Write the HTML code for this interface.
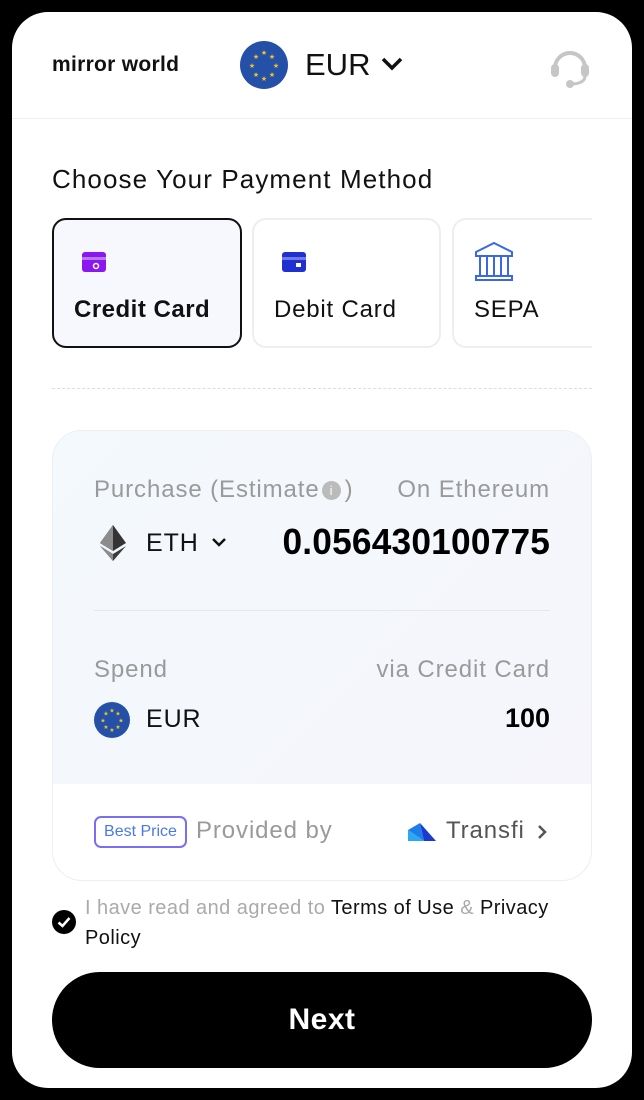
<!DOCTYPE html>
<html><head><style>
*{box-sizing:border-box;margin:0;padding:0}
body{width:644px;height:1100px;background:#000;font-family:"Liberation Sans",sans-serif;position:relative;overflow:hidden}
.card{position:absolute;left:12px;top:12px;width:620px;height:1076px;background:#fff;border-radius:36px}
.a{position:absolute}
.pm{position:absolute;top:218px;height:130px;border-radius:14px;border:2px solid #eee;background:#fff;overflow:hidden}
.pm span{position:absolute;left:20px;top:76px;font-size:24px;color:#111;letter-spacing:0.8px}
.g{color:#9a9a9a}
.w{letter-spacing:0.9px}
</style></head><body>
<div class="card"></div>
<div class="a" style="left:52px;top:53px;font-size:21px;font-weight:bold;letter-spacing:0.3px;color:#111">mirror world</div>
<svg class="a" style="left:240px;top:41px" width="48" height="48" viewBox="0 0 48 48"><circle cx="24" cy="24" r="24" fill="#2450a8"/><g fill="#f2c32b" font-size="7" text-anchor="middle"><text x="24" y="14">★</text><text x="24" y="40">★</text><text x="12" y="27">★</text><text x="36" y="27">★</text><text x="16" y="18">★</text><text x="32" y="18">★</text><text x="16" y="36">★</text><text x="32" y="36">★</text></g></svg>
<div class="a" style="left:305px;top:47px;font-size:31px;color:#111">EUR</div>
<svg class="a" style="left:380px;top:56px" width="24" height="16"><path d="M3 3l9 9 9-9" stroke="#111" stroke-width="3.5" fill="none"/></svg>
<svg class="a" style="left:548px;top:44px" width="44" height="44" viewBox="0 0 44 44"><path d="M7 24a15 15 0 0 1 30 0" stroke="#c6c6c6" stroke-width="4" fill="none"/><rect x="3" y="20" width="8" height="13" rx="4" fill="#c6c6c6"/><rect x="33" y="20" width="8" height="13" rx="4" fill="#c6c6c6"/><path d="M37 32q0 7-12 8" stroke="#c6c6c6" stroke-width="3" fill="none"/><circle cx="22" cy="40" r="4" fill="#c6c6c6"/></svg>
<div class="a" style="left:12px;top:118px;width:620px;height:1px;background:#eee"></div>
<div class="a" style="left:52px;top:164px;font-size:26px;color:#111;letter-spacing:1.1px">Choose Your Payment Method</div>
<div class="pm" style="left:52px;width:190px;border-color:#111;background:#f6f8fd"><svg class="a" style="left:28px;top:32px" width="26" height="20"><rect width="24" height="20" rx="3" fill="#8a17f0"/><rect y="5" width="24" height="3" fill="#b57af5"/><circle cx="14" cy="14" r="2.5" fill="none" stroke="#fff" stroke-width="1.5"/></svg><span style="font-weight:bold;letter-spacing:0.5px">Credit Card</span></div>
<div class="pm" style="left:252px;width:189px"><svg class="a" style="left:28px;top:32px" width="26" height="20"><rect width="24" height="20" rx="3" fill="#1f2fd0"/><rect y="5" width="24" height="3" fill="#6f7ae5"/><rect x="14" y="11" width="5" height="4" fill="#fff"/></svg><span>Debit Card</span></div>
<div class="pm" style="left:452px;width:160px;border-right:none"><svg class="a" style="left:20px;top:21px" width="40" height="40" viewBox="0 0 40 40" fill="none" stroke="#3a66e8" stroke-width="2"><path d="M2 11L20 2l18 9v4H2z"/><path d="M6 16v20M13 16v20M20 16v20M27 16v20M34 16v20"/><rect x="2" y="35" width="36" height="4"/></svg><span>SEPA</span></div>
<div class="a" style="left:592px;top:218px;width:40px;height:132px;background:#fff"></div>
<div class="a" style="left:52px;top:388px;width:540px;border-top:1px dashed #ddd"></div>
<div class="a" style="left:52px;top:430px;width:540px;height:451px;border:1px solid #eee;border-radius:30px;overflow:hidden">
<div style="height:353px;background:linear-gradient(135deg,#f3f9fd,#f5f5fb)"></div></div>
<div class="a g w" style="left:94px;top:476px;font-size:24px">Purchase (Estimate<span style="display:inline-block;width:19px;height:19px;border-radius:50%;background:#bbb;color:#fff;font-size:13px;text-align:center;line-height:19px;vertical-align:2px;margin:0 4px 0 2px;letter-spacing:0">i</span>)</div>
<div class="a g w" style="right:94px;top:476px;font-size:24px">On Ethereum</div>
<svg class="a" style="left:100px;top:525px" width="26" height="36" viewBox="0 0 26 36"><path d="M13 0L0 18l13 8 13-8z" fill="#343434"/><path d="M13 0L0 18l13 8z" fill="#8c8c8c"/><path d="M0 21l13 15 13-15-13 8z" fill="#3c3c3b"/><path d="M0 21l13 15v-7z" fill="#8c8c8c"/></svg>
<div class="a w" style="left:146px;top:529px;font-size:25px;color:#111">ETH</div>
<svg class="a" style="left:210px;top:536px" width="18" height="12"><path d="M3 3l6 6 6-6" stroke="#111" stroke-width="2.5" fill="none"/></svg>
<div class="a" style="right:94px;top:521px;font-size:36px;font-weight:bold;color:#000;letter-spacing:0.2px;transform:scaleX(0.98);transform-origin:right">0.056430100775</div>
<div class="a" style="left:94px;top:610px;width:456px;height:1px;background:#e4e8ee"></div>
<div class="a g w" style="left:94px;top:656px;font-size:24px">Spend</div>
<div class="a g w" style="right:94px;top:656px;font-size:24px">via Credit Card</div>
<svg class="a" style="left:94px;top:702px" width="36" height="36" viewBox="0 0 48 48"><circle cx="24" cy="24" r="24" fill="#2450a8"/><g fill="#f2c32b" font-size="8" text-anchor="middle"><text x="24" y="14">★</text><text x="24" y="40">★</text><text x="12" y="27">★</text><text x="36" y="27">★</text><text x="16" y="18">★</text><text x="32" y="18">★</text><text x="16" y="36">★</text><text x="32" y="36">★</text></g></svg>
<div class="a w" style="left:146px;top:705px;font-size:25px;color:#111">EUR</div>
<div class="a" style="right:94px;top:703px;font-size:27px;font-weight:bold;color:#000">100</div>
<div class="a" style="left:94px;top:816px;width:93px;height:32px;border:2px solid #7a6ff0;border-radius:7px;color:#4a7ae8;font-size:16px;text-align:center;line-height:28px">Best Price</div>
<div class="a g w" style="left:196px;top:817px;font-size:24px">Provided by</div>
<svg class="a" style="left:408px;top:822px" width="28" height="20"><path d="M0 8l12-7 4 18z" fill="#1e7de8"/><path d="M12 1l16 18H16z" fill="#1a3ad0"/><path d="M0 8l16 11H0z" fill="#2aa9f0"/></svg>
<div class="a w" style="left:446px;top:817px;font-size:24px;color:#555">Transfi</div>
<svg class="a" style="left:536px;top:823px" width="12" height="18"><path d="M3 3l6 6-6 6" stroke="#555" stroke-width="2.5" fill="none"/></svg>
<svg class="a" style="left:52px;top:910px" width="24" height="24"><circle cx="12" cy="12" r="12" fill="#000"/><path d="M6.5 12.5l4 3.5 7-8" stroke="#fff" stroke-width="2.5" fill="none"/></svg>
<div class="a" style="left:85px;top:893px;white-space:nowrap;font-size:20px;line-height:30px;color:#111;letter-spacing:0.45px"><span style="color:#aaa">I have read and agreed to </span>Terms of Use <span style="color:#aaa">&amp;</span> Privacy</div>
<div class="a" style="left:85px;top:923px;font-size:20px;line-height:30px;color:#111;letter-spacing:0.45px">Policy</div>
<div class="a" style="left:52px;top:972px;width:540px;height:96px;background:#000;border-radius:48px;color:#fff;font-size:30px;font-weight:bold;text-align:center;line-height:96px;letter-spacing:0.5px">Next</div>
</body></html>
